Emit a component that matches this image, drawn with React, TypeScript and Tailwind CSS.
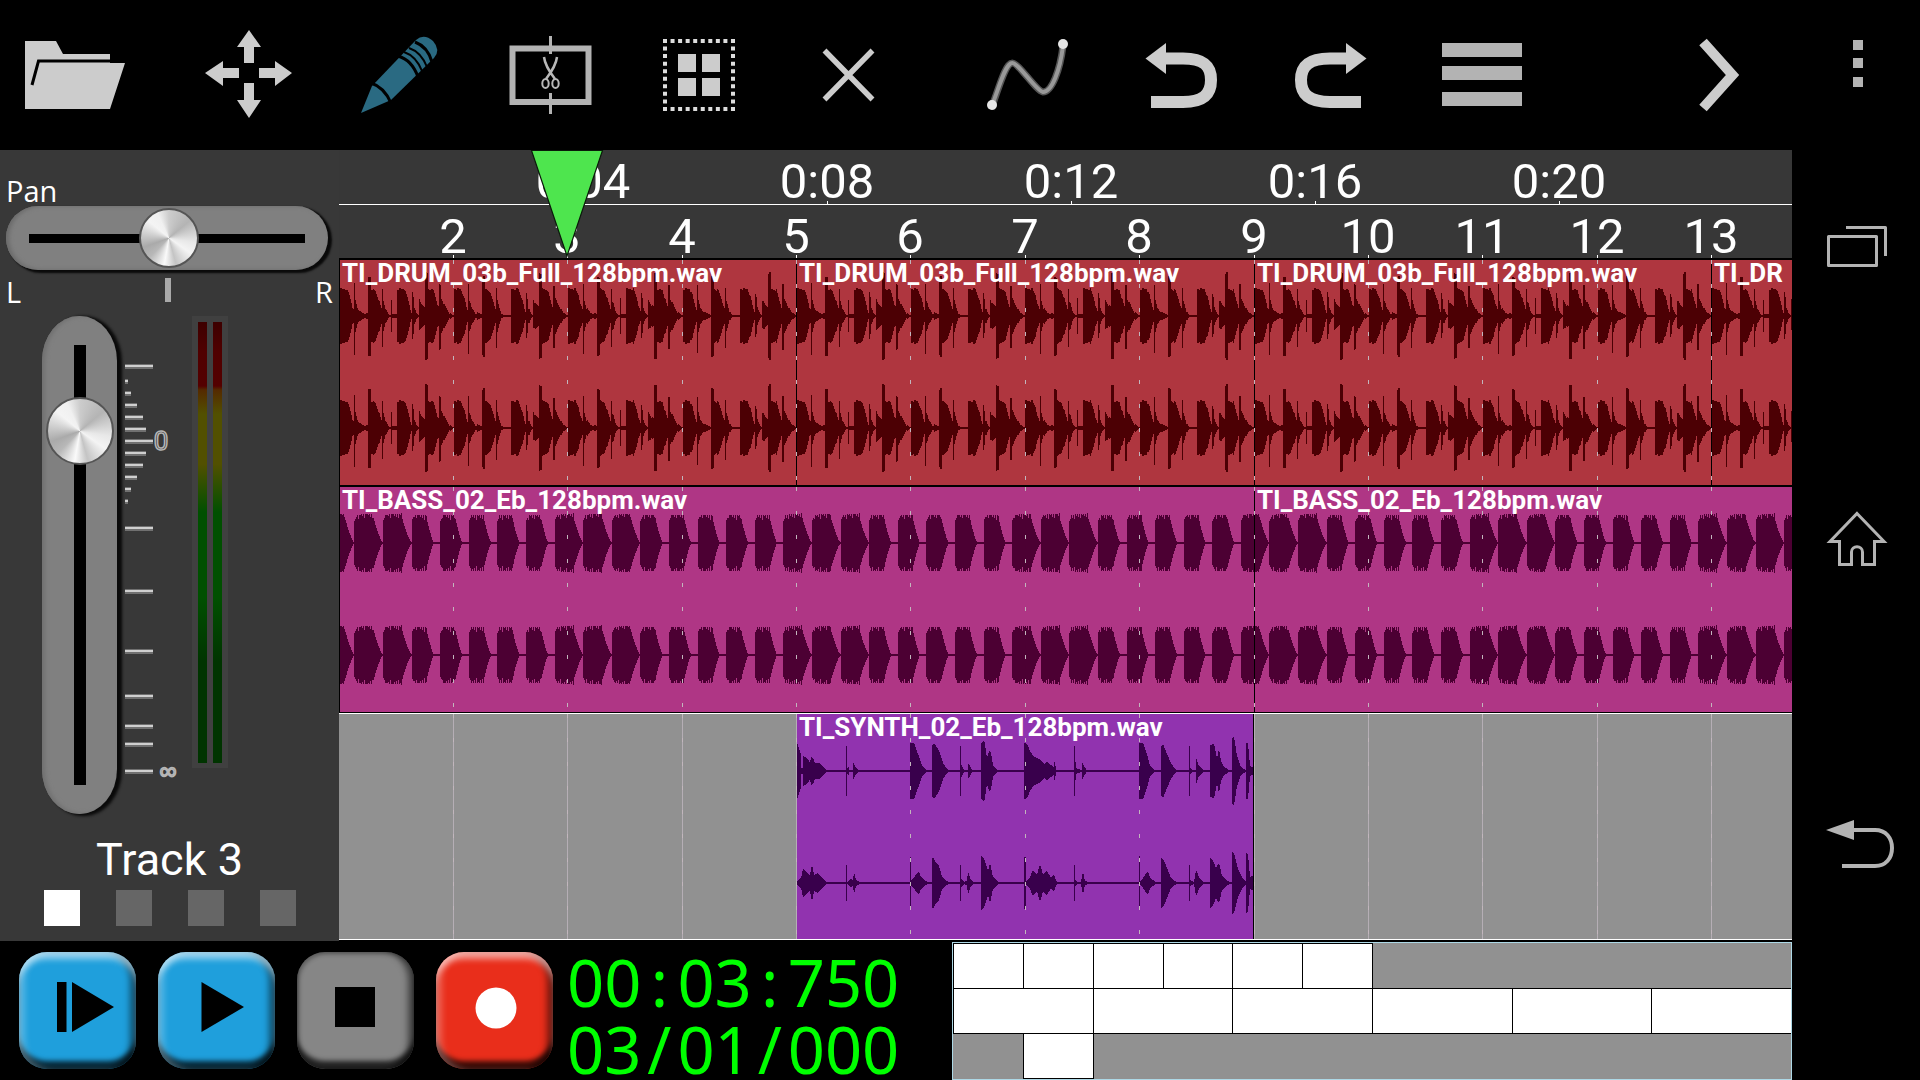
import React from "react";

/* ---------- time line geometry ---------- */
const PX_PER_SECOND = 61;
const BAR = PX_PER_SECOND * 1.875; // 128 bpm, four beats
const barX = (bar: number) => Math.floor((bar - 1) * BAR);
const secX = (s: number) => s * PX_PER_SECOND;

/* ---------- wave forms ---------- */
type Pt = [number, number, number?];

const drumStart: Pt[] = [
  [0, 28], [7, 28], [10, 22], [13, 10], [14.4, 6], [14.5, 33, 39], [15.5, 33, 39], [15.6, 18], [18, 9], [22, 4], [28.4, 3],
  [28.5, 40, 41], [31.5, 40, 41], [32, 28], [36, 26], [39, 18], [42.4, 7], [42.5, 28, 32], [43.5, 28, 32], [44, 16], [47, 6], [49.5, 1],
];
const drumEnd: Pt[] = [
  [57.5, 28], [65, 28], [68, 20], [71, 8], [72.4, 4], [72.5, 24, 23], [73.5, 24, 23], [75, 9], [78.5, 1],
  [79.5, 1], [79.6, 18, 14], [82, 13], [85.5, 10], [85.6, 44], [88.5, 44], [89, 28], [94, 27], [98, 13], [99.4, 9],
  [99.5, 32, 34], [101.5, 32, 34], [102, 18], [105, 12], [109, 5], [113, 1], [115, 0.5],
];
const drumOdd: Pt[] = [...drumStart, [51.4, 1], [51.5, 18], [52.5, 18], [52.6, 2], [57.4, 2], ...drumEnd];
const drumEven: Pt[] = [...drumStart, [57.4, 0.5], ...drumEnd];

const synthTop: Pt[] = [
  [0, 28], [2, 22], [4, 17], [4.1, 3], [6, 3], [6.1, 15], [10, 13], [13, 8], [14, 14], [16, 13], [18, 8], [22, 8], [25, 6], [28, 2], [31, 0.5],
  [48.9, 0.5], [49, 25], [50, 25], [50.1, 0.5], [51, 6], [52, 1], [55.9, 1], [56, 9], [58, 5], [61, 1], [63, 0.5],
  [112.9, 0.5], [113, 28], [117, 28], [121, 17], [125, 5], [129, 1], [134.9, 0.5], [135, 26], [138, 27], [142, 20], [146, 8], [150, 2], [154, 0.5],
  [162.9, 0.5], [163, 25], [164, 25], [164.1, 7], [167, 1], [170.9, 1], [171, 8], [174, 3], [176, 0.5],
  [183.9, 0.5], [184, 27], [187, 31], [188, 26], [190, 13], [192, 20], [194, 18], [196, 6], [199, 2], [203, 0.5],
  [226.9, 0.5], [227, 28], [230, 27], [233, 20], [236, 15], [242, 12], [247, 7], [250, 9], [254, 6], [256.9, 4], [257, 9], [258, 9], [259, 1], [261, 0.5],
  [276.9, 0.5], [277, 25], [278, 25], [278.1, 13], [279, 3], [284.9, 0.5], [285, 9], [287, 5], [290, 0.5],
  [341.9, 0.5], [342, 28], [346, 28], [350, 17], [353, 5], [358, 0.5], [363.9, 0.5], [364, 24], [366, 27], [370, 17], [374, 8], [378, 2], [381, 0.5],
  [391.9, 0.5], [392, 25], [393, 25], [393.1, 3], [395, 1], [398.9, 1], [399, 13], [401, 7], [407, 0.5],
  [412.9, 0.5], [413, 26], [417, 27], [420, 13], [422, 22], [424, 10], [427, 4], [433, 0.5], [434.9, 0.5], [435, 32], [437, 34], [440, 15], [444, 4],
  [448.9, 1], [449, 28], [451, 28], [453, 5], [457, 3],
];
const synthBottom: Pt[] = [
  [0, 1], [4, 5], [6, 14], [10, 10], [13, 8], [15, 19], [17, 8], [21, 10], [24, 6], [28, 2], [31, 0.5],
  [48.9, 0.5], [49, 18], [50, 18], [50.1, 1], [54, 4], [56, 3], [57, 11], [59, 3], [64, 0.5],
  [112.9, 0.5], [113, 26], [114, 26], [114.1, 2], [118, 7], [122, 11], [124, 6], [129, 2], [132, 0.5],
  [134.9, 0.5], [135, 24], [136, 26], [139, 20], [142, 17], [145, 6], [150, 2], [153, 0.5],
  [162.9, 0.5], [163, 18], [164, 18], [164.1, 5], [167, 1], [170, 2], [171, 11], [174, 3], [178, 0.5],
  [183.9, 0.5], [184, 27], [187, 24], [191, 12], [193, 20], [196, 6], [202, 1], [203, 0.5],
  [226.9, 0.5], [227, 26], [229, 26], [229.1, 1], [233, 6], [236, 13], [240, 8], [243, 19], [246, 8], [250, 12], [254, 5], [257, 8], [259, 2], [263, 0.5],
  [276.9, 0.5], [277, 18], [278, 18], [278.1, 4], [280, 1], [284, 1], [286, 11], [288, 2], [293, 0.5],
  [341.9, 0.5], [342, 27], [343, 27], [343.1, 1], [348, 8], [351, 11], [353, 5], [360, 0.5], [363.9, 0.5], [364, 26], [367, 22], [370, 15], [374, 5], [380, 0.5],
  [391.9, 0.5], [392, 18], [393, 18], [393.1, 3], [397, 1], [399, 13], [402, 6], [407, 0.5],
  [412.9, 0.5], [413, 26], [416, 22], [419, 15], [422, 20], [425, 7], [430, 2], [434.9, 0.5], [435, 31], [437, 30], [441, 14], [446, 4], [448.9, 2],
  [449, 30], [451, 28], [453, 6], [457, 8],
];

function sample(pts: Pt[], x: number): [number, number] {
  for (let i = 1; i < pts.length; i++) {
    const a = pts[i - 1];
    const b = pts[i];
    if (x <= b[0]) {
      const t = b[0] === a[0] ? 1 : Math.max(0, (x - a[0]) / (b[0] - a[0]));
      const ad = a[2] ?? a[1];
      const bd = b[2] ?? b[1];
      return [a[1] + (b[1] - a[1]) * t, ad + (bd - ad) * t];
    }
  }
  const l = pts[pts.length - 1];
  return [l[1], l[2] ?? l[1]];
}

const jitter = (x: number) => ((x * 7919) % 13) / 13;

function drumAt(x: number): [number, number] {
  const bar = Math.floor((x + 1) / BAR);
  const [u, d] = sample(bar % 2 ? drumEven : drumOdd, Math.round(x + 1 - bar * BAR));
  const j = u > 3 ? jitter(x) * 2 : 0;
  return [u - j, d - j];
}

function bassAt(x: number): [number, number] {
  const step = BAR / 4;
  const k = Math.floor((x - 14) / step);
  const p = x - 14 - k * step;
  const wide = [7, 0, 1].includes(((k % 8) + 8) % 8);
  const full = wide ? 19 : 15;
  const end = wide ? 28 : 22;
  let a = 0.5;
  if (p < 2) a = 22 + p * 2;
  else if (p < full) a = (wide ? 28 + p / 12 : 28) - (x % 2 ? 0 : jitter(x) * 5);
  else if (p < end) a = 1 + 24 * Math.pow(1 - (p - full) / (end - full), 1.3);
  return [a, a];
}

type Kind = "drum" | "bass" | "synth";

function wavePath(kind: Kind, width: number) {
  let d = "";
  for (const [cy, low] of [[57, false], [169, true]] as [number, boolean][]) {
    for (let x = 0; x < width; x++) {
      const [u, l] =
        kind === "drum" ? drumAt(x) : kind === "bass" ? bassAt(x) : sample(low ? synthBottom : synthTop, x + 0.5);
      d += `M${x + 0.5} ${cy - Math.round(u)}V${cy + Math.max(1, Math.round(l))}`;
    }
  }
  return d;
}

type ClipData = { from: number; to: number; label: string };

const kinds: Record<Kind, { box: string; wave: string }> = {
  drum: { box: "bg-[#af363f] border-black", wave: "stroke-[#4c0004]" },
  bass: { box: "bg-[#af3685] border-black", wave: "stroke-[#4c0033]" },
  synth: { box: "bg-[#9133af] border-transparent", wave: "stroke-[#39004c]" },
};

function Clip({ kind, clip }: { kind: Kind; clip: ClipData }) {
  const left = barX(clip.from);
  const width = barX(clip.to) - left;
  const synth = kind === "synth";
  return (
    <div
      className={`absolute inset-y-0 overflow-hidden border-l ${kinds[kind].box} ${synth ? "border-r border-r-black bg-clip-padding" : "border-y"}`}
      style={{ left, width }}
    >
      <svg className={`absolute left-0 ${synth ? "top-0" : "-top-px"} h-[226px] ${kinds[kind].wave}`} width={width} height={226} shapeRendering="crispEdges" aria-hidden="true">
        <path d={wavePath(kind, width)} strokeWidth="1" fill="none" />
      </svg>
    </div>
  );
}

const bars = [2, 3, 4, 5, 6, 7, 8, 9, 10, 11, 12, 13];

function Track({ kind, clips, selected }: { kind: Kind; clips: ClipData[]; selected?: boolean }) {
  return (
    <section className={`relative h-[227px] overflow-hidden bg-[#919191] ${selected ? "border-y border-white" : ""}`} aria-label={`${kind} track`}>
      {bars.map((b) => (
        <div key={b} className="absolute inset-y-0 w-px bg-[#b5aeb5]" style={{ left: barX(b) }} />
      ))}
      {clips.map((c) => (
        <Clip key={c.from} kind={kind} clip={c} />
      ))}
      {bars.map((b) => (
        <div
          key={b}
          className={`absolute inset-y-0 w-px bg-[repeating-linear-gradient(to_bottom,#c2b6bd_0_4px,transparent_4px_24px)] ${selected ? "" : "mt-px"}`}
          style={{ left: barX(b) }}
        />
      ))}
      {clips.map((c) => (
        <span
          key={c.from}
          className={`absolute top-0 whitespace-nowrap pl-0.5 text-[26px] font-bold text-white ${selected ? "leading-[26px]" : "leading-[28px]"}`}
          style={{ left: barX(c.from) + 1 }}
        >
          {c.label}
        </span>
      ))}
    </section>
  );
}

const DRUM = "TI_DRUM_03b_Full_128bpm.wav";
const BASS = "TI_BASS_02_Eb_128bpm.wav";
const SYNTH = "TI_SYNTH_02_Eb_128bpm.wav";

function RulerMark({ x, children }: { x: number; children: React.ReactNode }) {
  return (
    <>
      <span className="absolute top-[3px] -translate-x-1/2 text-[49px] leading-[57px] whitespace-nowrap text-white" style={{ left: x }}>
        {children}
      </span>
      <span className="absolute bottom-0 h-[3px] w-px bg-white" style={{ left: x }} />
    </>
  );
}

function Timeline() {
  return (
    <main className="relative min-w-0 flex-1 overflow-hidden bg-black">
      <div className="bg-[#373737]">
        <div className="relative h-[55px] border-b border-white">
          {[4, 8, 12, 16, 20].map((s) => (
            <RulerMark key={s} x={secX(s)}>
              0:{String(s).padStart(2, "0")}
            </RulerMark>
          ))}
        </div>
        <div className="relative h-[53px]">
          {bars.map((b) => (
            <RulerMark key={b} x={barX(b)}>
              {b}
            </RulerMark>
          ))}
        </div>
      </div>
      <div className="border-t border-black">
        <Track
          kind="drum"
          clips={[
            { from: 1, to: 5, label: DRUM },
            { from: 5, to: 9, label: DRUM },
            { from: 9, to: 13, label: DRUM },
            { from: 13, to: 17, label: "TI_DR" },
          ]}
        />
        <Track
          kind="bass"
          clips={[
            { from: 1, to: 9, label: BASS },
            { from: 9, to: 17, label: BASS },
          ]}
        />
        <Track kind="synth" selected clips={[{ from: 5, to: 9, label: SYNTH }]} />
      </div>
      <svg className="absolute top-0 -translate-x-1/2" style={{ left: barX(3) }} width="74" height="108" viewBox="0 0 74 108" aria-label="Playhead">
        <path d="M1.500 .5H72.500L37 106Z" fill="#4ee54e" stroke="#0a1a0a" strokeWidth="1.200" />
      </svg>
    </main>
  );
}

/* ---------- toolbar ---------- */
function Tool({ label, x, children, className = "" }: { label: string; x: number; children: React.ReactNode; className?: string }) {
  return (
    <button type="button" aria-label={label} className={`h-[150px] w-[150px] shrink-0 ${className}`}>
      <svg width="150" height="150" viewBox={`${x} 0 150 150`} fill="none">
        {children}
      </svg>
    </button>
  );
}

function Toolbar() {
  const dots = Array.from({ length: 10 }, (_, i) => i * 7.55);
  return (
    <header className="flex bg-black">
      <Tool label="Open" x={0} className="mr-6">
        <path d="M25 41H56L63 54H110V63H125L110 109H25Z" fill="#ccc" />
        <path d="M32 85L38.500 61H111" stroke="#000" strokeWidth="3" />
      </Tool>
      <Tool label="Move" x={174}>
        <path
          d="M249 30L261 47H254V63H244V47H237ZM249 118L261 100H254V83H244V100H237ZM205 73L223 61V68H239V78H223V86ZM292 73L275 61V68H259V78H275V86Z"
          fill="#ccc"
        />
      </Tool>
      <Tool label="Draw" x={324}>
        <path d="M361 113L372 86L416 40Q424 33 433 41Q441 50 434 58L391 100Z" fill="#2a6a82" />
        <path d="M371 83Q384 87 391 103" stroke="#000" strokeWidth="3" />
        <path d="M398 56Q412 60 418 77M415 42Q428 47 432 62" stroke="#000" strokeWidth="3" />
        <path d="M404 52Q416 56 422 71M409 48Q421 52 427 67" stroke="#000" strokeWidth="2" />
      </Tool>
      <Tool label="Split" x={474}>
        <path d="M512.500 48.500H588.500V102H512.500Z" stroke="#b3b3b3" strokeWidth="6" />
        <path d="M550.500 36V54M550.500 93V114" stroke="#b3b3b3" strokeWidth="3" />
        <path d="M544 57Q545 66 555 79M557 57Q556 66 546 79" stroke="#b8b8b8" strokeWidth="2.500" />
        <ellipse cx="545.500" cy="83.500" rx="3.200" ry="4.500" stroke="#b8b8b8" strokeWidth="2" />
        <ellipse cx="555.500" cy="83.500" rx="3.200" ry="4.500" stroke="#b8b8b8" strokeWidth="2" />
      </Tool>
      <Tool label="Select" x={624}>
        <path d="M678 54h18v18h-18ZM702 54h18v18h-18ZM678 78h18v18h-18ZM702 78h18v18h-18Z" fill="#ccc" />
        {dots.map((d) => (
          <path key={d} d={`M${663 + d} 39h4v4h-4ZM${663 + d} 107h4v4h-4ZM663 ${39 + d}h4v4h-4ZM731 ${39 + d}h4v4h-4Z`} fill="#ddd" />
        ))}
      </Tool>
      <Tool label="Delete" x={774}>
        <path d="M824.500 50.500L872.500 99.500M872.500 50.500L824.500 99.500" stroke="#ccc" strokeWidth="5.500" />
      </Tool>
      <Tool label="Automation" x={957} className="ml-[33px]">
        <path d="M991 109C999 88 1005 64 1012 63C1018 62 1036 91 1043 92C1052 92 1060 70 1063 46" stroke="#555" strokeWidth="7" />
        <path d="M991 108C999 88 1005 64 1012 63C1018 62 1036 91 1043 92C1052 92 1060 70 1063 46" stroke="#999" strokeWidth="4" />
        <circle cx="992" cy="105" r="5" fill="#e6e6e6" />
        <circle cx="1063" cy="44" r="5" fill="#e6e6e6" />
      </Tool>
      <Tool label="Undo" x={1107}>
        <path d="M1145.500 58.500L1166 43V74Z" fill="#ccc" />
        <path d="M1165 58.500H1183C1204 58.500 1211 66 1211 80C1211 95 1202 102 1183 102H1151" stroke="#ccc" strokeWidth="12" />
      </Tool>
      <Tool label="Redo" x={1257}>
        <path d="M1366.500 58.500L1346 43V74Z" fill="#ccc" />
        <path d="M1348 58.500H1330C1309 58.500 1301 66 1301 80C1301 95 1310 102 1330 102H1361" stroke="#ccc" strokeWidth="12" />
      </Tool>
      <Tool label="Menu" x={1407}>
        <path d="M1442 43h80v14h-80ZM1442 66h80v14h-80ZM1442 92h80v14h-80Z" fill="#b3b3b3" />
      </Tool>
      <Tool label="Next" x={1642} className="ml-auto">
        <path d="M1703 42L1732.500 75L1703 108" stroke="#ccc" strokeWidth="10" />
      </Tool>
    </header>
  );
}

/* ---------- mixer strip ---------- */
const scaleTicks: [number, number][] = [
  [366, 28], [381, 3], [393, 6], [405, 12], [417, 18], [429, 21], [441, 28], [453, 21], [465, 18], [477, 12], [489, 6], [501, 3],
  [528, 28], [591, 28], [651, 28], [696, 28], [726, 28], [744, 28], [771, 28],
];

function MixerStrip() {
  return (
    <aside className="flex w-[339px] shrink-0 flex-col bg-[#383838] pt-[25px] text-white">
      <label htmlFor="pan" className="h-[31px] pl-1.5 font-['Open_Sans'] text-[29px] leading-8">
        Pan
      </label>
      <div className="ml-1.5 h-16 w-[322px] rounded-[32px] bg-[#808080] px-[23px] shadow-[inset_3px_0_4px_#6a6a6a,3px_2px_2px_1px_#0a0a0a]">
        <div className="flex h-16 items-center bg-[linear-gradient(#000,#000)] bg-[length:100%_9px] bg-center bg-no-repeat">
          <input
            id="pan"
            type="range"
            defaultValue="51"
            className="h-16 w-full appearance-none bg-transparent [&::-webkit-slider-thumb]:h-[60px] [&::-webkit-slider-thumb]:w-[60px] [&::-webkit-slider-thumb]:appearance-none [&::-webkit-slider-thumb]:rounded-full [&::-webkit-slider-thumb]:border-2 [&::-webkit-slider-thumb]:border-[#555] [&::-webkit-slider-thumb]:bg-[conic-gradient(#ccc_0deg,#b4b4b4_50deg,#e8e8e8_100deg,#f4f4f4_125deg,#c4c4c4_165deg,#fafafa_190deg,#b8b8b8_225deg,#aaa_250deg,#f4f4f4_310deg,#f0f0f0_335deg,#ccc_360deg)]"
          />
        </div>
      </div>
      <div className="flex h-[46px] items-start justify-between pt-[6px] pr-1.5 pl-1.5 font-['Open_Sans'] text-[29px] leading-8">
        <span>L</span>
        <span className="mt-0.5 h-6 w-1.5 bg-[#a9a9a9]" />
        <span>R</span>
      </div>
      <div className="flex h-[500px] pl-[42px]">
        <div className="h-[498px] w-[75px] rounded-[37px/45px] bg-[#808080] py-[29px] shadow-[inset_3px_0_4px_#707070,4px_1px_3px_1px_#0a0a0a]">
          <div className="flex h-[440px] w-[75px] justify-center bg-[linear-gradient(#000,#000)] bg-[length:12px_100%] bg-center bg-no-repeat">
            <input
              type="range"
              aria-label="Volume"
              min="0"
              max="100"
              defaultValue="86"
              className="h-full w-[75px] appearance-none bg-transparent [direction:rtl] [writing-mode:vertical-lr] [&::-webkit-slider-thumb]:h-[68px] [&::-webkit-slider-thumb]:w-[68px] [&::-webkit-slider-thumb]:appearance-none [&::-webkit-slider-thumb]:rounded-full [&::-webkit-slider-thumb]:border-2 [&::-webkit-slider-thumb]:border-[#555] [&::-webkit-slider-thumb]:bg-[conic-gradient(#ccc_0deg,#b4b4b4_50deg,#e8e8e8_100deg,#f4f4f4_125deg,#c4c4c4_165deg,#fafafa_190deg,#b8b8b8_225deg,#aaa_250deg,#f4f4f4_310deg,#f0f0f0_335deg,#ccc_360deg)]"
            />
          </div>
        </div>
        <svg className="ml-2 h-[500px] w-[60px]" viewBox="125 316 60 500" shapeRendering="crispEdges" aria-hidden="true">
          {scaleTicks.map(([y, w]) => (
            <g key={y}>
              <path d={`M125 ${y - 2}h${w}v5h${-w}Z`} fill="#707070" />
              <path d={`M125 ${y - 1}h${w}v2h${-w}Z`} fill="#cfcfcf" />
            </g>
          ))}
          <text x="161" y="450" textAnchor="middle" fontSize="26" fill="none" stroke="#b5b5b5" strokeWidth="1.500" shapeRendering="auto">
            0
          </text>
          <text x="168" y="779" textAnchor="middle" fontSize="24" fontFamily="'Liberation Sans', sans-serif" fill="none" stroke="#b5b5b5" strokeWidth="1.500" shapeRendering="auto">
            ∞
          </text>
        </svg>
        <div className="ml-[7px] flex h-[452px] w-9 justify-between bg-[#404040] px-1.5 pt-1.5 pb-[5px]" role="img" aria-label="Level meter">
          {[0, 1].map((i) => (
            <div
              key={i}
              className="w-[9px] bg-[linear-gradient(#3d0000_0px,#500000_30px,#540000_64px,#552a00_68px,#525000_92px,#525000_142px,#005000_190px,#005000_275px,#003400_340px)]"
            />
          ))}
        </div>
      </div>
      <div className="mt-3.5 text-center text-[45px] leading-[60px]">Track 3</div>
      <div className="flex gap-9 pt-0 pb-[15px] pl-11">
        <span className="h-9 w-9 bg-white" />
        <span className="h-9 w-9 bg-[#666]" />
        <span className="h-9 w-9 bg-[#666]" />
        <span className="h-9 w-9 bg-[#666]" />
      </div>
    </aside>
  );
}

/* ---------- transport ---------- */
function TransportButton({ label, tone, children }: { label: string; tone: string; children: React.ReactNode }) {
  return (
    <button
      type="button"
      aria-label={label}
      className={`h-[117px] w-[117px] shrink-0 rounded-[28px] ${tone}`}
    >
      <svg width="117" height="117" viewBox="0 0 117 117">
        {children}
      </svg>
    </button>
  );
}

const lit =
  "shadow-[inset_0_9px_6px_-2px_rgba(255,255,255,0.55),inset_8px_0_6px_-2px_rgba(255,255,255,0.25),inset_-8px_0_6px_-2px_rgba(0,0,0,0.5),inset_0_-9px_5px_-1px_rgba(0,0,0,0.75)]";
const unlit = "shadow-[inset_-8px_0_6px_-2px_rgba(0,0,0,0.5),inset_0_-9px_5px_-1px_rgba(0,0,0,0.75),inset_2px_2px_4px_rgba(0,0,0,0.3)]";

function Digits({ parts }: { parts: string[] }) {
  return (
    <div className="flex">
      {parts.map((p, i) => (
        <span key={i} className={p.length === 1 ? "w-[36px] text-center" : ""}>
          {p}
        </span>
      ))}
    </div>
  );
}

function OverviewClip({ className }: { className: string }) {
  return <div className={`-mr-px -mb-px border border-black bg-white ${className}`} />;
}

function Transport() {
  return (
    <footer className="flex h-[139px] overflow-hidden bg-black">
      <div className="flex gap-[22px] pt-[11px] pl-[19px]">
        <TransportButton label="Play from start" tone={`bg-[#1f9fdc] ${lit}`}>
          <path d="M38 30H47.500V80H38ZM53 30L95 55L53 80Z" />
        </TransportButton>
        <TransportButton label="Play" tone={`bg-[#1f9fdc] ${lit}`}>
          <path d="M43.500 30L86 55L43.500 80Z" />
        </TransportButton>
        <TransportButton label="Stop" tone={`bg-[#868686] ${unlit}`}>
          <path d="M38 35H78V75H38Z" />
        </TransportButton>
        <TransportButton label="Record" tone={`bg-[#e92e1b] ${lit}`}>
          <circle cx="60" cy="56" r="20.500" fill="#fff" />
        </TransportButton>
      </div>
      <div className="ml-3.5 pt-2 font-['Noto_Sans'] text-[65px] leading-[67px] text-[#00ff00]">
        <Digits parts={["00", ":", "03", ":", "750"]} />
        <Digits parts={["03", "/", "01", "/", "000"]} />
      </div>
      <div className="mt-px ml-auto w-[840px] overflow-hidden border border-[#add8e6] bg-[#919191]">
        <div className="grid h-full grid-cols-12 grid-rows-3 pb-px">
          {["a", "b", "c", "d", "e", "f"].map((k) => (
            <OverviewClip key={k} className="row-start-1" />
          ))}
          {["a", "b", "c", "d", "e", "f"].map((k) => (
            <OverviewClip key={k} className="col-span-2 row-start-2" />
          ))}
          <OverviewClip className="col-start-2 row-start-3" />
        </div>
      </div>
    </footer>
  );
}

/* ---------- system navigation ---------- */
function SystemBar() {
  return (
    <nav className="flex w-32 shrink-0 flex-col bg-black" aria-label="System">
      <button type="button" aria-label="More options">
        <svg width="128" height="128" viewBox="1792 0 128 128" fill="#b3b3b3">
          <path d="M1853 40h10v10h-10ZM1853 58h10v10h-10ZM1853 77h10v10h-10Z" />
        </svg>
      </button>
      <button type="button" aria-label="Recent apps">
        <svg width="128" height="264" viewBox="1792 128 128 264" fill="none" stroke="#b3b3b3" strokeWidth="3" strokeLinejoin="round">
          <path d="M1828.500 236.500H1876.500V265.500H1828.500ZM1846 227.500H1885.500V256" />
        </svg>
      </button>
      <button type="button" aria-label="Home">
        <svg width="128" height="300" viewBox="1792 392 128 300" fill="none" stroke="#b3b3b3" strokeWidth="3">
          <path d="M1857 513.500L1884 541.500H1874.500V564.500H1862.500V552C1862.500 545 1851.500 545 1851.500 552V564.500H1839.500V541.500H1830Z" />
        </svg>
      </button>
      <button type="button" aria-label="Back">
        <svg width="128" height="300" viewBox="1792 692 128 300" fill="none">
          <path d="M1826 830L1854 820V840Z" fill="#b3b3b3" />
          <path d="M1853 830H1875C1886 830 1892 838 1892 848C1892 858 1886 866 1875 866H1842" stroke="#b3b3b3" strokeWidth="4" />
        </svg>
      </button>
    </nav>
  );
}

export default function App() {
  return (
    <div className="flex min-h-screen bg-black font-['Roboto',sans-serif]">
      <div className="flex min-w-0 flex-1 flex-col">
        <Toolbar />
        <div className="flex">
          <MixerStrip />
          <Timeline />
        </div>
        <Transport />
      </div>
      <SystemBar />
    </div>
  );
}
